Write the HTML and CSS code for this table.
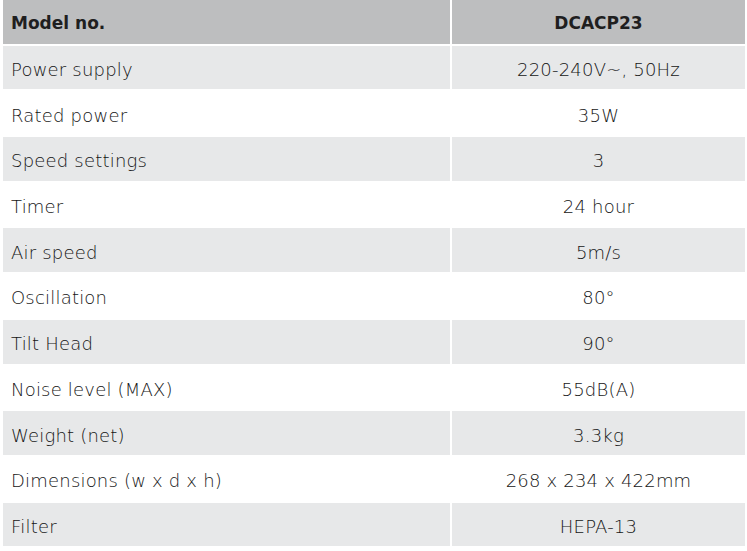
FILE: index.html
```html
<!DOCTYPE html>
<html>
<head>
<meta charset="utf-8">
<link rel="stylesheet" href="styles.css">
</head>
<body>
<div class="spec">
  <div class="row head"><div class="cell label">Model no.</div><div class="cell value">DCACP23</div></div>
  <div class="row shade"><div class="cell label">Power supply</div><div class="cell value">220-240V~, 50Hz</div></div>
  <div class="row"><div class="cell label">Rated power</div><div class="cell value">35W</div></div>
  <div class="row shade"><div class="cell label">Speed settings</div><div class="cell value">3</div></div>
  <div class="row"><div class="cell label">Timer</div><div class="cell value">24 hour</div></div>
  <div class="row shade"><div class="cell label">Air speed</div><div class="cell value">5m/s</div></div>
  <div class="row"><div class="cell label">Oscillation</div><div class="cell value">80°</div></div>
  <div class="row shade"><div class="cell label">Tilt Head</div><div class="cell value">90°</div></div>
  <div class="row"><div class="cell label">Noise level (MAX)</div><div class="cell value">55dB(A)</div></div>
  <div class="row shade"><div class="cell label">Weight (net)</div><div class="cell value">3.3kg</div></div>
  <div class="row"><div class="cell label">Dimensions (w x d x h)</div><div class="cell value">268 x 234 x 422mm</div></div>
  <div class="row shade"><div class="cell label">Filter</div><div class="cell value">HEPA-13</div></div>
</div>
</body>
</html>
```
FILE: styles.css
```css
html, body {
  margin: 0;
  padding: 0;
  background: #ffffff;
}
.spec {
  display: flex;
  flex-direction: column;
  gap: 2px;
  padding: 0 2px 0 3px;
  font-family: "DejaVu Sans", "Liberation Sans", sans-serif;
  font-weight: 200;
  font-size: 18px;
  letter-spacing: 0.2px;
  color: #151515;
}
.row {
  display: grid;
  grid-template-columns: 447px 293px;
  column-gap: 2px;
  height: 43.7px;
}
.cell {
  display: flex;
  align-items: center;
  padding-top: 4px;
  box-sizing: border-box;
}
.label {
  padding-left: 8px;
}
.value {
  justify-content: center;
}
.row.shade .cell {
  background: #e7e8e9;
}
.row.head .cell {
  background: #bdbebf;
  font-weight: 700;
  font-size: 17px;
  letter-spacing: 0;
  color: #1f1f1f;
  padding-top: 2px;
}
```
